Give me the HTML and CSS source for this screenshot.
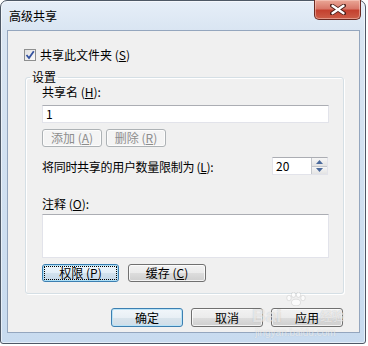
FILE: index.html
```html
<!DOCTYPE html>
<html lang="zh-CN">
<head>
<meta charset="utf-8">
<title>高级共享</title>
<link rel="stylesheet" href="styles.css">
</head>
<body>
<div class="window">
  <div class="titlebar">
    <span class="title">高级共享</span>
    <div class="close">
      <svg width="16" height="11" viewBox="0 0 16 11"><path d="M2 1.5 L14 9.5 M14 1.5 L2 9.5" stroke="#4a1e18" stroke-width="4" stroke-linecap="round"/><path d="M2.5 1.8 L13.5 9.2 M13.5 1.8 L2.5 9.2" stroke="#ffffff" stroke-width="2.4" stroke-linecap="round"/></svg>
    </div>
  </div>
  <div class="client">
    <div class="check-row">
      <span class="checkbox"><svg width="10" height="10" viewBox="0 0 10 10"><path d="M1.5 5 L4 8 L8.8 1.2" fill="none" stroke="#3553a0" stroke-width="1.8"/></svg></span>
      <span>共享此文件夹 (<u>S</u>)</span>
    </div>
    <fieldset class="group">
      <legend>设置</legend>
      <div class="label first">共享名 (<u>H</u>):</div>
      <div class="textbox">1</div>
      <div class="btn-row">
        <button class="btn disabled w-add">添加 (<u>A</u>)</button>
        <button class="btn disabled w-del">删除 (<u>R</u>)</button>
      </div>
      <div class="limit-row">
        <span>将同时共享的用户数量限制为 (<u>L</u>):</span>
        <div class="spinner">
          <span class="spin-val">20</span>
          <div class="spin-btns">
            <span class="spin-up"><svg width="7" height="4" viewBox="0 0 7 4"><path d="M0 4 L3.5 0 L7 4 Z" fill="#4b6a9c"/></svg></span>
            <span class="spin-down"><svg width="7" height="4" viewBox="0 0 7 4"><path d="M0 0 L3.5 4 L7 0 Z" fill="#4b6a9c"/></svg></span>
          </div>
        </div>
      </div>
      <div class="label comment">注释 (<u>O</u>):</div>
      <div class="textarea"></div>
      <div class="btn-row row2">
        <button class="btn focused w-perm">权限 (<u>P</u>)</button>
        <button class="btn w-cache">缓存 (<u>C</u>)</button>
      </div>
    </fieldset>
    <div class="footer">
      <button class="btn default w-foot">确定</button>
      <button class="btn w-foot">取消</button>
      <button class="btn w-foot">应用</button>
    </div>
  </div>
  <div class="watermark">
    <svg class="wm-paw" width="22" height="14" viewBox="0 0 22 14"><g fill="rgba(255,255,255,0.7)" stroke="rgba(140,140,140,0.35)" stroke-width="0.6"><ellipse cx="4" cy="6" rx="2.2" ry="2.8"/><ellipse cx="8.5" cy="2.8" rx="2.2" ry="2.6"/><ellipse cx="13.5" cy="2.8" rx="2.2" ry="2.6"/><ellipse cx="18" cy="6" rx="2.2" ry="2.8"/><ellipse cx="11" cy="10.5" rx="4.5" ry="3.3"/></g></svg>
    <span class="wm-bai">Bai</span>
    <span class="wm-jy">经验</span>
    <span class="wm-sub">jingyan.baidu.com</span>
  </div>
</div>
</body>
</html>
```
FILE: styles.css
```css
* { box-sizing: border-box; }
body {
  margin: 0;
  width: 368px;
  height: 346px;
  background: #ffffff;
  font-family: "Noto Sans CJK SC", "Liberation Sans", sans-serif;
  font-size: 12px;
  color: #000;
}
u { text-decoration: underline; text-underline-offset: 1px; }
.window {
  position: relative;
  width: 366px;
  height: 344px;
  border: 1px solid #4e5866;
  border-radius: 7px 7px 3px 3px;
  background: linear-gradient(to bottom, #e6eef8 0, #d9e5f2 30px, #c8dbef 100%);
  box-shadow: inset 0 0 0 1px rgba(255,255,255,0.55);
  display: flex;
  flex-direction: column;
}
.titlebar {
  height: 29px;
  display: flex;
  align-items: flex-start;
  padding-left: 8px;
}
.title {
  line-height: 14px;
  margin-top: 8px;
}
.close {
  margin-left: auto;
  margin-right: 4px;
  margin-top: -1px;
  width: 47px;
  height: 20px;
  border: 1px solid #6b2a22;
  border-top: none;
  border-radius: 0 0 5px 5px;
  background: linear-gradient(to bottom, #eaa797 0%, #d9786a 45%, #c4412f 55%, #cc5e48 100%);
  box-shadow: inset 0 0 0 1px rgba(255,220,210,0.45);
  display: flex;
  align-items: center;
  justify-content: center;
}
.client {
  flex: 1;
  margin: 0 5px 10px 6px;
  border: 1px solid #94a6be;
  background: #f0f0f0;
  display: flex;
  flex-direction: column;
  padding-top: 17px;
}
.check-row {
  display: flex;
  align-items: center;
  height: 14px;
  line-height: 14px;
  margin-left: 16px;
  gap: 4px;
}
.checkbox {
  width: 12px;
  height: 12px;
  border: 1px solid #8e8f8f;
  background: linear-gradient(135deg, #e0e0e0, #fbfbfb);
  display: flex;
  align-items: center;
  justify-content: center;
}
.group {
  margin: 8px 15px 0 17px;
  padding: 0 14px 11px 16px;
  border: 1px solid #d5dfe5;
  border-radius: 3px;
  box-shadow: 1px 1px 0 #ffffff inset, 1px 1px 0 #ffffff;
  min-width: 0;
}
.group legend {
  margin-left: -12px;
  padding: 0 2px;
  line-height: 14px;
  height: 14px;
}
.label {
  line-height: 14px;
  height: 14px;
}
.label.first { margin-top: 1px; }
.textbox {
  margin-top: 6px;
  height: 18px;
  border: 1px solid #e2e3ea;
  border-top-color: #abadb3;
  background: #fff;
  line-height: 16px;
  padding-left: 3px;
}
.btn-row {
  margin-top: 6px;
  display: flex;
  gap: 4px;
}
.btn-row.row2 { gap: 9px; }
.btn {
  font-family: inherit;
  font-size: 12px;
  height: 18px;
  line-height: 16px;
  padding: 0;
  color: #000;
  border: 1px solid #707070;
  border-radius: 3px;
  background: linear-gradient(to bottom, #f2f2f2 0%, #ebebeb 50%, #dddddd 51%, #cfcfcf 100%);
  box-shadow: inset 0 0 0 1px rgba(255,255,255,0.75);
}
.btn.disabled {
  color: #8d8d8d;
  border-color: #adb2b5;
  background: #f4f4f4;
}
.btn.focused {
  border-color: #3c7fb1;
  background: linear-gradient(to bottom, #edf6fc 0%, #e2eef7 50%, #d2e2ee 51%, #c4d8e8 100%);
  box-shadow: inset 0 0 0 1px #aee0f7;
  outline: 1px dotted #000;
  outline-offset: -3px;
}
.btn.default {
  border-color: #3c7fb1;
  background: linear-gradient(to bottom, #f1f6fa 0%, #e8eff5 50%, #d9e4ec 51%, #cfdde8 100%);
  box-shadow: inset 0 0 0 1px #b9e3f7;
}
.w-add { width: 60px; }
.w-del { width: 60px; }
.w-perm { width: 77px; }
.w-cache { width: 78px; }
.limit-row {
  margin-top: 10px;
  display: flex;
  align-items: center;
  justify-content: space-between;
  letter-spacing: -0.3px;
}
.spinner {
  width: 56px;
  height: 18px;
  margin-right: 1px;
  border: 1px solid #e2e3ea;
  border-top-color: #abadb3;
  background: #fff;
  display: flex;
  letter-spacing: 0;
}
.spin-val {
  flex: 1;
  line-height: 16px;
  padding-left: 3px;
}
.spin-btns {
  width: 16px;
  display: flex;
  flex-direction: column;
  border-left: 1px solid #c4c7cc;
}
.spin-up, .spin-down {
  flex: 1;
  display: flex;
  align-items: center;
  justify-content: center;
  background: linear-gradient(to bottom, #f6f6f6, #e3e3e3);
}
.spin-up { border-bottom: 1px solid #c4c7cc; }
.label.comment { margin-top: 22px; }
.textarea {
  margin-top: 3px;
  height: 44px;
  border: 1px solid #e2e3ea;
  border-top-color: #abadb3;
  background: #fff;
}
.footer {
  margin-top: 14px;
  padding-right: 16px;
  display: flex;
  justify-content: flex-end;
  gap: 8px;
}
.w-foot { width: 72px; height: 19px; }
.watermark {
  position: absolute;
  left: 0;
  top: 0;
  width: 100%;
  height: 100%;
  pointer-events: none;
}
.wm-paw {
  position: absolute;
  left: 284px;
  top: 291px;
}
.wm-bai, .wm-jy {
  position: absolute;
  top: 304px;
  font-family: "Liberation Sans", "Noto Sans CJK SC", sans-serif;
  font-size: 19px;
  font-weight: bold;
  line-height: 22px;
  color: rgba(255,255,255,0.6);
  text-shadow: 0 0 1px rgba(120,120,120,0.4);
}
.wm-bai { left: 251px; }
.wm-jy { left: 319px; font-size: 12px; top: 309px; line-height: 14px; }
.wm-sub {
  position: absolute;
  left: 254px;
  top: 327px;
  font-family: "Liberation Sans", sans-serif;
  font-size: 10px;
  line-height: 10px;
  color: rgba(255,255,255,0.6);
  text-shadow: 0 0 1px rgba(120,120,120,0.3);
}
```
